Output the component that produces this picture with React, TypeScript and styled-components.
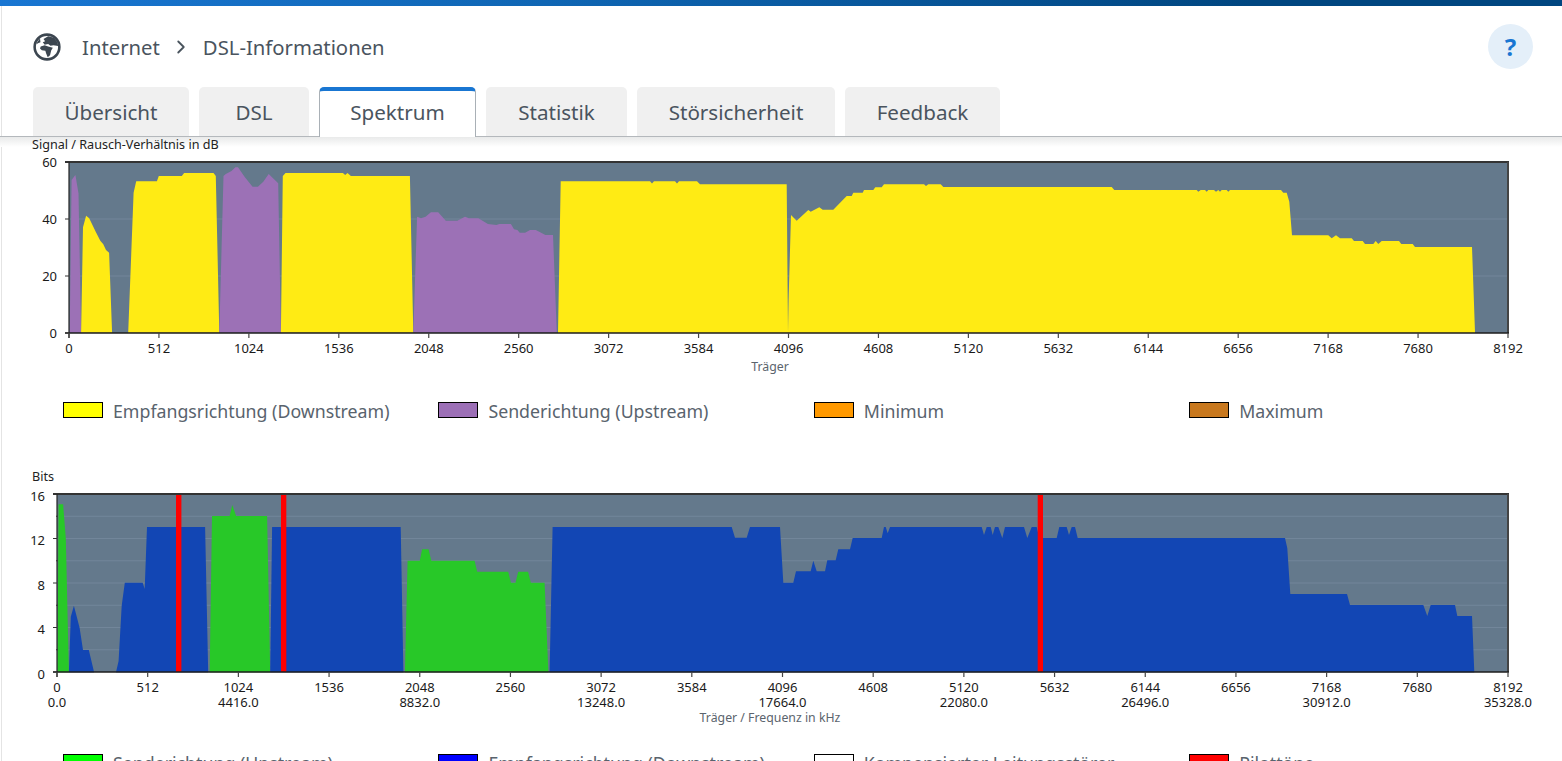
import React from "react";
import styled, { createGlobalStyle } from "styled-components";
import { ChevronRight } from "lucide-react";

type P = [number, number];

const Global = createGlobalStyle`
  html, body { margin: 0; padding: 0; background: #fff; overflow: hidden; }
  * { box-sizing: border-box; }
`;

const FONT = `"Noto Sans", "Open Sans", "Liberation Sans", sans-serif`;

const Page = styled.div`
  width: 1562px;
  height: 761px;
  overflow: hidden;
  font-family: ${FONT};
  background: linear-gradient(#e4e4e4, #e4e4e4) 1px 0 / 1px 100% no-repeat, #fff;
`;
const TopBar = styled.div`
  height: 6px;
  background: linear-gradient(90deg, #1976d2 0%, #0f66b4 35%, #004680 80%, #004680 100%);
`;
const Header = styled.header`
  height: 81px;
  display: flex;
  align-items: center;
  padding: 0 29px 0 33px;
`;
const Crumbs = styled.nav`
  display: flex;
  align-items: center;
  margin-left: 21px;
  flex: 1;
  font-size: 20.3px;
  color: #4a545e;
`;
const Sep = styled.span`
  display: flex;
  width: 43px;
  justify-content: center;
  color: #4a545e;
`;
const Help = styled.button`
  width: 45px;
  height: 45px;
  border: 0;
  padding: 0;
  border-radius: 50%;
  background: #e4eff9;
  color: #1976d2;
  font: 700 24px ${FONT};
`;
const TabRow = styled.div`
  height: 50px;
  display: flex;
  gap: 10px;
  padding-left: 33px;
  border-bottom: 1px solid #b4b8bc;
`;
const Tab = styled.div<{ $w: number; $active?: boolean }>`
  width: ${(p) => p.$w}px;
  position: relative;
  margin-bottom: ${(p) => (p.$active ? "-1px" : "0")};
  display: flex;
  align-items: center;
  justify-content: center;
  padding-bottom: ${(p) => (p.$active ? "5px" : "0")};
  font-size: 20.6px;
  color: #4a545e;
  border-radius: 5px 5px 0 0;
  background: ${(p) => (p.$active ? "#fff" : "#f0f0f0")};
  border-top: ${(p) => (p.$active ? "4px solid #1976d2" : "0")};
  border-left: ${(p) => (p.$active ? "1px solid #a9b0b6" : "0")};
  border-right: ${(p) => (p.$active ? "1px solid #a9b0b6" : "0")};
`;
const Content = styled.main`
  background: linear-gradient(#e9eaea, #fff) 0 0 / 100% 10px no-repeat;
`;
const ChartSvg = styled.svg`
  display: block;
  width: 1562px;
`;
const ChartGap = styled.div`
  height: 50px;
`;
const Legend = styled.ul`
  list-style: none;
  margin: 0;
  padding: 0 0 0 63px;
  height: 15px;
  display: grid;
  grid-template-columns: repeat(4, 375.4px);
`;
const LegendItem = styled.li`
  display: flex;
  align-items: center;
  height: 16px;
  font-size: 17.75px;
  line-height: 18px;
  color: #59636d;
  white-space: nowrap;
`;
const LegendText = styled.span`
  padding-top: 1px;
`;
const Swatch = styled.span<{ $c: string }>`
  width: 40px;
  height: 16px;
  margin-right: 10px;
  flex: none;
  border: 1px solid #000;
  background: ${(p) => p.$c};
`;
const Tick = styled.text<{ $a?: string }>`
  font-family: ${FONT};
  font-size: 13px;
  fill: #1a1a1a;
  text-anchor: ${(p) => p.$a || "middle"};
`;
const AxisName = styled.text`
  font-family: ${FONT};
  font-size: 12.3px;
  fill: #5b646d;
  text-anchor: middle;
`;
const Title = styled.text`
  font-family: ${FONT};
  font-size: 12.6px;
  fill: #222;
`;

function pairs(a: number[]): P[] {
  const out: P[] = [];
  for (let i = 0; i < a.length; i += 2) out.push([a[i], a[i + 1]]);
  return out;
}
const z2 = (a: number[]): P[] => pairs(a).map(([x, y]) => [x / 2.613, 150 + y / 3]);
const z3 = (a: number[]): P[] => pairs(a).map(([x, y]) => [x / 2.613, 465 + y / 3]);
const z4 = (a: number[]): P[] => pairs(a).map(([x, y]) => [1200 + x / 3, y / 3]);
const z5 = (a: number[]): P[] => pairs(a).map(([x, y]) => [780 + x / 3, 170 + y / 3]);
const z6 = (a: number[]): P[] => pairs(a).map(([x, y]) => [720 + x / 3, 500 + y / 3]);
const z7 = (a: number[]): P[] => pairs(a).map(([x, y]) => [1200 + x / 3, 520 + y / 3]);

const YEL = "#ffeb14";
const PUR = "#9c71b6";
const BLU = "#1246b4";
const GRN = "#28c828";

const snrShapes: { c: string; p: P[] }[] = [
  { c: PUR, p: z2([182,548, 187,90, 197,75, 205,130, 212,548]) },
  { c: YEL, p: z2([212,548, 217,232, 225,197, 233,205, 250,245, 262,272, 270,283, 277,300, 285,308, 293,548]) },
  { c: YEL, p: z2([335,548, 349,128, 356,94, 410,94, 415,78, 475,78, 481,69, 558,69, 564,78, 573,548]) },
  { c: PUR, p: z2([573,548, 584,78, 590,72, 605,63, 615,52, 622,52, 640,82, 660,110, 674,110, 688,95, 702,72, 727,100, 734,548]) },
  { c: YEL, p: z2([734,548, 739,78, 746,69, 896,69, 902,75, 908,69, 917,78, 1071,78, 1080,548]) },
  { c: PUR, p: z2([1080,548, 1090,200, 1100,205, 1112,200, 1126,187, 1145,187, 1165,212, 1195,212, 1215,200, 1225,205, 1250,205, 1275,222, 1297,225, 1305,222, 1335,222, 1343,238, 1352,240, 1358,248, 1372,248, 1385,240, 1400,240, 1425,255, 1445,255, 1455,548]) },
  {
    c: YEL,
    p: [
      [558, 333], [560.7, 181.3], [650, 181.3], [652, 183.5], [654, 181.3], [675, 181.3], [677, 183.5], [679, 181.3], [697, 181.3], [700, 184.3], [786.7, 184.3],
      [788, 333],
      [788.6, 300],
      ...z5([33,135, 50,152, 85,120, 92,125, 118,112, 128,119, 160,119, 200,78, 215,78, 220,68, 248,68, 252,60, 280,60, 286,52, 305,52, 312,43, 432,43, 438,48, 445,43, 482,43, 490,51, 995,51, 1003,60, 1250,60, 1255,65, 1262,60, 1275,60, 1280,65, 1285,60, 1302,60, 1308,65, 1315,60, 1320,65, 1325,60, 1340,60, 1345,65, 1350,60]),
      ...z4([243,570, 250,578, 260,578, 268,605, 276,706, 385,706, 395,715, 408,706, 420,715, 455,715, 462,723, 488,723, 495,732, 520,732, 527,723, 535,732, 545,723, 597,723, 604,732, 638,732, 645,741, 816,741, 825,997]),
      [1475, 333],
    ],
  },
];

const bitShapes: { c: string; p: P[] }[] = [
  { c: GRN, p: z3([150,622, 153,118, 165,118, 172,220, 180,622]) },
  { c: BLU, p: z3([180,622, 185,455, 193,422, 208,488, 217,555, 232,555, 246,622]) },
  { c: BLU, p: z3([303,622, 310,588, 318,422, 326,353, 373,353, 378,372, 384,186, 536,186, 544,622]) },
  { c: GRN, p: z3([548,622, 554,153, 600,153, 607,120, 617,153, 698,153, 706,622]) },
  { c: BLU, p: z3([706,622, 711,186, 1047,186, 1054,622]) },
  { c: GRN, p: z3([1058,622, 1065,287, 1097,287, 1103,253, 1120,253, 1127,287, 1240,287, 1247,320, 1328,320, 1335,353, 1347,353, 1354,320, 1380,320, 1387,353, 1423,353, 1433,622]) },
  {
    c: BLU,
    p: [
      ...z3([1436,622, 1444,186]),
      ...z6([35,81, 45,113, 80,113, 90,81, 180,81, 190,248, 220,248, 228,214, 272,214, 280,182, 290,214, 315,214, 322,181, 347,181, 355,148, 390,148, 398,114, 485,114, 492,81, 497,81, 503,100, 510,81, 785,81, 792,105, 800,81, 812,81, 818,105, 825,81, 835,81, 847,114, 855,81, 912,81, 922,114, 935,81, 950,81, 958,114, 1010,114, 1018,81, 1040,81, 1047,105, 1055,81, 1065,81, 1073,114]),
      ...z7([255,54, 262,85, 271,222, 441,222, 450,255, 670,255, 682,288, 692,255, 765,255, 772,288, 816,288, 823,457]),
    ],
  },
];

const toPts = (p: P[]) => p.map(([x, y]) => `${x.toFixed(1)},${y.toFixed(1)}`).join(" ");

type ChartProps = {
  top: number;
  height: number;
  x0: number;
  x1: number;
  y0: number;
  y1: number;
  yMax: number;
  yStep: number;
  yLabelEvery: number;
  yLabelX: number;
  yLabelDy: number;
  shapes: { c: string; p: P[] }[];
  title: string;
  titleY: number;
  axisName: string;
  axisY: number;
  tickY: number;
  freqY?: number;
  pilots?: [number, number][];
};

function Chart(c: ChartProps) {
  const toY = (v: number) => c.y1 - (v / c.yMax) * (c.y1 - c.y0);
  const toX = (t: number) => c.x0 + (t / 8192) * (c.x1 - c.x0);
  const ys: number[] = [];
  for (let v = 0; v <= c.yMax; v += c.yStep) ys.push(v);
  const xs: number[] = [];
  for (let t = 0; t <= 8192; t += 512) xs.push(t);
  return (
    <ChartSvg height={c.height} viewBox={`0 ${c.top} 1562 ${c.height}`}>
      <Title x={32} y={c.titleY}>{c.title}</Title>
      <rect x={c.x0} y={c.y0} width={c.x1 - c.x0} height={c.y1 - c.y0} fill="#64798c" />
      {ys.filter((v) => v > 0 && v < c.yMax).map((v) => (
        <line key={v} x1={c.x0} x2={c.x1} y1={toY(v)} y2={toY(v)} stroke="#72869a" strokeWidth="1" />
      ))}
      {c.shapes.map((s, i) => (
        <polygon key={i} points={toPts(s.p)} fill={s.c} />
      ))}
      {(c.pilots || []).map(([a, b]) => (
        <rect key={a} x={a} y={c.y0} width={b - a} height={c.y1 - c.y0} fill="#ff0000" />
      ))}
      <line x1={c.x0 - 4} x2={c.x1 + 1} y1={c.y0} y2={c.y0} stroke="#333" strokeWidth="2" />
      <line x1={c.x1} x2={c.x1} y1={c.y0} y2={c.y1} stroke="#444" strokeWidth="2" />
      <line x1={c.x0} x2={c.x0} y1={c.y0} y2={c.y1 + 5} stroke="#222" strokeWidth="1.2" />
      <line x1={c.x0 - 4} x2={c.x1 + 1} y1={c.y1} y2={c.y1} stroke="#1d1d1d" strokeWidth="1.5" />
      {ys.map((v) => {
        const labelled = v % c.yLabelEvery === 0;
        return (
          <g key={v}>
            {labelled ? (
              <>
                <line x1={c.x0 - 4} x2={c.x0} y1={toY(v)} y2={toY(v)} stroke="#333" />
                <Tick x={c.yLabelX} y={toY(v) + c.yLabelDy} $a="end">{v}</Tick>
              </>
            ) : (
              <line x1={c.x0 - 1} x2={c.x0 + 1} y1={toY(v)} y2={toY(v)} stroke="#333" />
            )}
          </g>
        );
      })}
      {xs.map((t, i) => (
        <g key={t}>
          <line x1={toX(t)} x2={toX(t)} y1={c.y1} y2={c.y1 + 5} stroke="#444" strokeWidth="1.2" />
          <Tick x={toX(t)} y={c.tickY}>{t}</Tick>
          {c.freqY && i % 2 === 0 ? (
            <Tick x={toX(t)} y={c.freqY}>{(t * 4.3125).toFixed(1)}</Tick>
          ) : null}
        </g>
      ))}
      <AxisName x={770} y={c.axisY}>{c.axisName}</AxisName>
    </ChartSvg>
  );
}

function Globe() {
  return (
    <svg width="28" height="28" viewBox="0 0 24 24" aria-hidden="true">
      <circle cx="12" cy="12" r="10.6" fill="#fff" stroke="#3c4650" strokeWidth="2.2" />
      <path fill="#3c4650" d="M9 5.2 L13 2.8 L18 4 L21 8 L21.6 11.2 L17.5 10.4 L15 11 L13 9.4 L10 10 L8.4 8 L10.4 7 Z" />
      <path fill="#3c4650" d="M6.6 11.6 L10 10.6 L13 11.6 L17 12.6 L15.6 15 L14.6 19 L12.6 20.8 L11.2 17.4 L10.6 15.2 L7.6 14.8 L6 13.2 Z" />
      <path fill="#3c4650" d="M2.6 9.4 L6 4.6 L6.4 8 Z" />
    </svg>
  );
}

const tabs: [string, number][] = [
  ["Übersicht", 156],
  ["DSL", 110],
  ["Spektrum", 157],
  ["Statistik", 141],
  ["Störsicherheit", 198],
  ["Feedback", 155],
];

const legend1: [string, string][] = [
  ["Empfangsrichtung (Downstream)", "#ffff00"],
  ["Senderichtung (Upstream)", "#9c6fb6"],
  ["Minimum", "#ff9900"],
  ["Maximum", "#c8781e"],
];
const legend2: [string, string][] = [
  ["Senderichtung (Upstream)", "#00ff00"],
  ["Empfangsrichtung (Downstream)", "#0000ff"],
  ["Kompensierter Leitungsstörer", "#ffffff"],
  ["Pilottöne", "#ff0000"],
];

function LegendRow({ items }: { items: [string, string][] }) {
  return (
    <Legend>
      {items.map(([t, c]) => (
        <LegendItem key={t}>
          <Swatch $c={c} />
          <LegendText>{t}</LegendText>
        </LegendItem>
      ))}
    </Legend>
  );
}

export default function App() {
  return (
    <Page>
      <Global />
      <TopBar />
      <Header>
        <Globe />
        <Crumbs>
          <span>Internet</span>
          <Sep><ChevronRight size={22} strokeWidth={2} /></Sep>
          <span>DSL-Informationen</span>
        </Crumbs>
        <Help>?</Help>
      </Header>
      <TabRow>
        {tabs.map(([t, w]) => (
          <Tab key={t} $w={w} $active={t === "Spektrum"}>{t}</Tab>
        ))}
      </TabRow>
      <Content>
        <Chart
          top={137} height={265} x0={69} x1={1508} y0={162} y1={333}
          yMax={60} yStep={20} yLabelEvery={20} yLabelX={57} yLabelDy={4.5}
          shapes={snrShapes}
          title="Signal / Rausch-Verhältnis in dB" titleY={149}
          axisName="Träger" axisY={371} tickY={353}
        />
        <LegendRow items={legend1} />
        <ChartGap />
        <Chart
          top={467} height={287} x0={57} x1={1508} y0={494} y1={672}
          yMax={16} yStep={2} yLabelEvery={4} yLabelX={45} yLabelDy={6.5}
          shapes={bitShapes}
          pilots={[[176, 181.4], [281, 286.3], [1037.7, 1043]]}
          title="Bits" titleY={481}
          axisName="Träger / Frequenz in kHz" axisY={722} tickY={692} freqY={707}
        />
        <LegendRow items={legend2} />
      </Content>
    </Page>
  );
}
